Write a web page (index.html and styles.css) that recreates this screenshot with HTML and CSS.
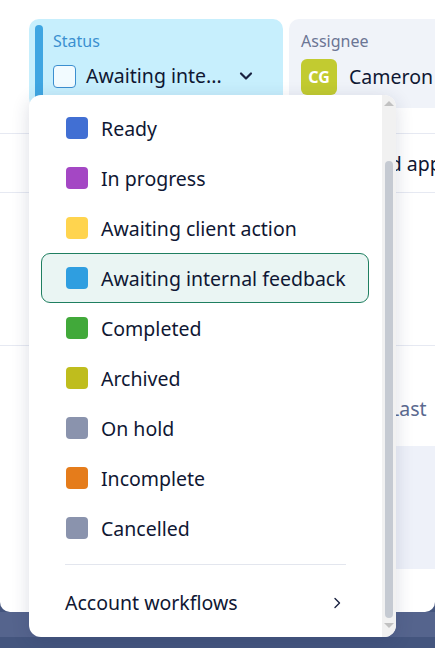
FILE: index.html
```html
<!DOCTYPE html>
<html>
<head>
<meta charset="utf-8">
<link rel="stylesheet" href="styles.css">
</head>
<body>
<div class="app">
  <div class="main">
    <div class="fields">
      <div class="field status">
        <div class="bar"></div>
        <div class="field-body">
          <div class="label">Status</div>
          <div class="value">
            <span class="checkbox"></span>
            <span class="val-text">Awaiting inte...</span>
            <svg class="chev-down" width="14" height="10" viewBox="0 0 14 10"><path d="M2 2.5 L7 7.5 L12 2.5" fill="none" stroke="#1a2240" stroke-width="2.2" stroke-linecap="round" stroke-linejoin="round"/></svg>
          </div>
        </div>
      </div>
      <div class="field assignee">
        <div class="label muted">Assignee</div>
        <div class="value">
          <span class="avatar">CG</span>
          <span class="val-text">Cameron Green</span>
        </div>
      </div>
    </div>
    <div class="row row-a"></div>
    <div class="row row-b"><span class="cell-text">Signed approval</span></div>
    <div class="row row-c"></div>
    <div class="row row-d"><span class="cell-text muted">Last</span></div>
    <div class="row row-e"><div class="panel"></div></div>
  </div>
  <div class="band"></div>
</div>

<div class="dropdown">
  <div class="menu">
    <ul class="options">
      <li class="option"><span class="swatch" style="background:#416fd3"></span>Ready</li>
      <li class="option"><span class="swatch" style="background:#a447c4"></span>In progress</li>
      <li class="option"><span class="swatch" style="background:#ffd44e"></span>Awaiting client action</li>
      <li class="option selected"><span class="swatch" style="background:#2f9ee0"></span>Awaiting internal feedback</li>
      <li class="option"><span class="swatch" style="background:#41a93a"></span>Completed</li>
      <li class="option"><span class="swatch" style="background:#bfbd1d"></span>Archived</li>
      <li class="option"><span class="swatch" style="background:#8a93ad"></span>On hold</li>
      <li class="option"><span class="swatch" style="background:#e57c1b"></span>Incomplete</li>
      <li class="option"><span class="swatch" style="background:#8a93ad"></span>Cancelled</li>
    </ul>
    <div class="divider"></div>
    <div class="workflows">
      <span>Account workflows</span>
      <svg width="10" height="14" viewBox="0 0 10 14"><path d="M3 2.5 L7.5 7 L3 11.5" fill="none" stroke="#1a2240" stroke-width="1.4" stroke-linecap="round" stroke-linejoin="round"/></svg>
    </div>
  </div>
  <div class="scrollbar">
    <span class="arrow up"></span>
    <div class="track"><div class="thumb"></div></div>
    <span class="arrow down"></span>
  </div>
</div>
</body>
</html>
```

FILE: styles.css
```css
* { box-sizing: border-box; }
html, body { margin: 0; padding: 0; }
body {
  width: 435px;
  height: 648px;
  overflow: hidden;
  font-family: "Noto Sans", "Open Sans", sans-serif;
  color: #0f1733;
  background: #fff;
}
.app {
  height: 648px;
  display: flex;
  flex-direction: column;
  background: #44557e;
}
.main {
  height: 612px;
  flex-shrink: 0;
  background: #fff;
  border-radius: 0 0 10px 10px;
  overflow: hidden;
  display: flex;
  flex-direction: column;
}
.band {
  height: 25px;
  background: #55648d;
}
.fields {
  display: flex;
  gap: 6px;
  padding: 19px 0 0 29px;
  height: 108px;
  flex-shrink: 0;
}
.field {
  border-radius: 10px;
  display: flex;
}
.status {
  width: 254px;
  flex-shrink: 0;
  background: #c7effd;
  padding: 6px 0 0 6px;
  gap: 10px;
}
.bar {
  width: 8px;
  height: 80px;
  background: #3fa6e2;
  border-radius: 4px;
}
.label {
  font-size: 16px;
  color: #3b8fd0;
  line-height: 20px;
  margin-top: 6px;
}
.label.muted { color: #6b7594; }
.value {
  display: flex;
  align-items: center;
  margin-top: 12px;
  white-space: nowrap;
}
.checkbox {
  width: 23px;
  height: 23px;
  border: 1.5px solid #3b8fd0;
  border-radius: 4px;
  background: #f2fbff;
  margin-right: 10px;
}
.val-text {
  font-size: 19.5px;
  line-height: 26px;
}
.chev-down { margin-left: 17px; }
.assignee {
  flex: 1;
  min-width: 0;
  overflow: hidden;
  background: #f0f3f9;
  flex-direction: column;
  padding: 6px 0 0 12px;
  border-radius: 10px 0 0 10px;
}
.assignee .label { margin-top: 6px; }
.assignee .value { margin-top: 8px; }
.avatar {
  width: 36px;
  height: 36px;
  flex-shrink: 0;
  border-radius: 6px;
  background: #c2cb30;
  color: #fff;
  font-weight: 700;
  font-size: 16px;
  display: flex;
  align-items: center;
  justify-content: center;
  margin-right: 12px;
}
.row {
  border-bottom: 1px solid #e6e9f2;
  display: flex;
  align-items: center;
  flex-shrink: 0;
}
.row-a { height: 26px; }
.row-b { height: 59px; }
.row-c { height: 153px; }
.row-d { height: 100px; align-items: flex-start; padding-top: 49px; border-bottom: none; }
.row-e { flex: 1; border-bottom: none; align-items: flex-start; justify-content: flex-end; }
.cell-text {
  font-size: 19.5px;
  white-space: nowrap;
  padding-left: 339px;
}
.row-d .cell-text { padding-left: 389px; color: #5b6a90; }
.panel {
  width: 40px;
  height: 123px;
  background: #eef1f9;
}

.dropdown {
  position: absolute;
  left: 29px;
  top: 95px;
  width: 367px;
  height: 542px;
  background: #fff;
  border-radius: 12px;
  box-shadow: 0 4px 18px rgba(30, 45, 90, 0.16);
  display: flex;
  overflow: hidden;
}
.menu {
  flex: 1;
  padding: 8px 13px 0 12px;
}
.options {
  list-style: none;
  margin: 0;
  padding: 0;
}
.option {
  height: 50px;
  display: flex;
  align-items: center;
  padding-left: 24px;
  font-size: 19.5px;
  border: 1px solid transparent;
  border-radius: 9px;
  white-space: nowrap;
}
.option.selected {
  border-color: #1f7f60;
  background: #eaf5f3;
}
.swatch {
  width: 22px;
  height: 22px;
  border-radius: 4px;
  margin-right: 13px;
  flex-shrink: 0;
}
.divider {
  height: 1px;
  background: #e3e6ee;
  margin: 11px 23px 0 24px;
}
.workflows {
  height: 75px;
  display: flex;
  align-items: center;
  justify-content: space-between;
  padding: 0 27px 0 24px;
  font-size: 19.5px;
}
.scrollbar {
  width: 14px;
  background: #f1f1f1;
  display: flex;
  flex-direction: column;
  align-items: center;
  padding: 0 0 2px;
}
.arrow {
  width: 0;
  height: 0;
  border-left: 5px solid transparent;
  border-right: 5px solid transparent;
  margin: 5px 0;
}
.arrow.up { border-bottom: 5px solid #c1c1c1; margin-top: 6px; }
.arrow.down { border-top: 5px solid #c1c1c1; margin-bottom: 7px; }
.track {
  flex: 1;
  width: 100%;
  display: flex;
  flex-direction: column;
  align-items: center;
  justify-content: flex-end;
}
.thumb {
  width: 8px;
  height: 457px;
  background: #c5cad2;
  border-radius: 4px;
}
```
